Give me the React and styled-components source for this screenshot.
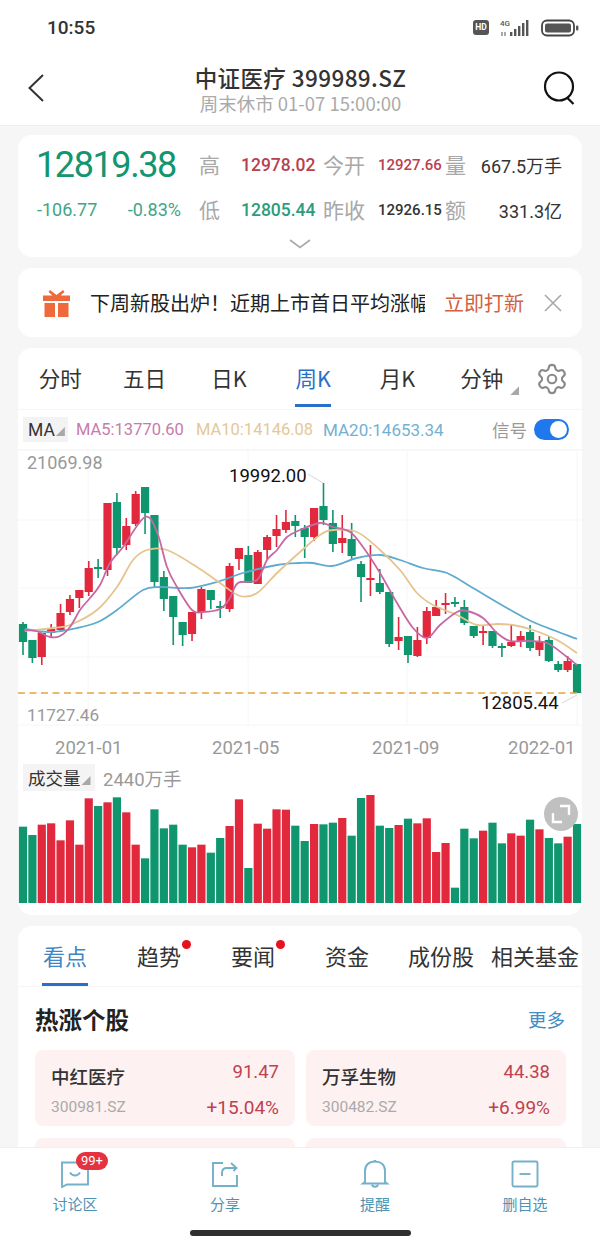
import React from "react";
import styled, { createGlobalStyle } from "styled-components";
import { Settings } from "lucide-react";

const RED = "#e2283c";
const GREEN = "#10966f";

// [up?, bodyTop, bodyBottom, wickTop, wickBottom]
const candles = [
  [0, 624, 642, 622, 655], [0, 640, 658, 640, 663], [1, 633, 657, 633, 665], [1, 629, 633, 624, 637],
  [1, 613, 630, 604, 632], [1, 599, 612, 595, 615], [1, 590, 598, 590, 608], [1, 568, 592, 561, 596],
  [0, 567, 569, 559, 578], [1, 503, 570, 503, 576], [0, 502, 548, 493, 555], [1, 526, 545, 518, 550],
  [1, 494, 524, 491, 526], [0, 487, 513, 487, 534], [0, 515, 582, 515, 588], [0, 577, 599, 571, 611],
  [0, 596, 617, 596, 645], [0, 622, 635, 622, 646], [1, 612, 634, 612, 641], [1, 589, 612, 587, 619],
  [0, 590, 600, 590, 609], [0, 606, 607, 601, 618], [1, 566, 609, 563, 612], [1, 548, 559, 548, 570],
  [0, 555, 583, 546, 583], [1, 552, 584, 550, 584], [1, 537, 550, 535, 560], [1, 529, 536, 515, 547],
  [1, 522, 530, 510, 533], [0, 521, 526, 515, 537], [0, 528, 537, 525, 558], [1, 508, 537, 508, 541],
  [0, 506, 520, 483, 525], [0, 523, 544, 510, 552], [1, 538, 543, 515, 553], [0, 539, 556, 523, 560],
  [0, 564, 577, 561, 602], [1, 578, 580, 545, 596], [0, 583, 592, 569, 594], [0, 592, 644, 592, 647],
  [1, 637, 641, 617, 650], [0, 636, 655, 636, 663], [1, 640, 656, 627, 657], [1, 611, 638, 607, 644],
  [1, 607, 616, 600, 616], [1, 603, 604, 593, 614], [0, 602, 604, 597, 607], [0, 607, 623, 600, 625],
  [0, 626, 636, 626, 638], [1, 631, 633, 625, 645], [0, 631, 646, 631, 648], [0, 646, 647, 643, 657],
  [1, 642, 646, 625, 647], [1, 636, 641, 631, 647], [0, 632, 648, 625, 651], [1, 642, 650, 636, 656],
  [0, 640, 661, 636, 662], [0, 664, 670, 661, 672], [1, 661, 670, 656, 672], [0, 664, 693, 664, 693],
];

// [up?, top in px from y=750, times 3]
const volumes = [
  [0, 230], [0, 255], [1, 224], [1, 220], [1, 271], [1, 211], [1, 284], [1, 145], [0, 168], [1, 157],
  [0, 142], [1, 187], [1, 284], [0, 325], [0, 178], [0, 235], [0, 224], [0, 284], [1, 292], [1, 284],
  [0, 308], [0, 264], [1, 228], [1, 148], [0, 354], [1, 221], [1, 236], [1, 178], [1, 179], [0, 227],
  [0, 273], [1, 222], [0, 223], [0, 218], [1, 204], [0, 257], [0, 144], [1, 133], [0, 227], [0, 234],
  [1, 225], [0, 206], [1, 220], [1, 205], [1, 306], [1, 279], [0, 413], [0, 236], [0, 265], [1, 242],
  [0, 218], [0, 280], [1, 250], [1, 257], [0, 209], [1, 238], [0, 264], [0, 280], [1, 260], [0, 222],
];

const ma5 = [[24, 630], [36, 631], [50, 637], [60, 636], [70, 627], [80, 610], [90, 598], [100, 585], [110, 563], [123, 547], [145, 517], [157, 532], [167, 567], [177, 587], [192, 610], [203, 612], [220, 609], [230, 598], [238, 583], [257, 580], [267, 560], [277, 550], [287, 537], [300, 530], [320, 523], [333, 527], [350, 532], [363, 547], [380, 573], [397, 603], [413, 628], [427, 638], [440, 625], [457, 612], [467, 611], [483, 618], [497, 633], [510, 641], [527, 641], [547, 643], [567, 657], [577, 665]];
const ma10 = [[25, 631], [53, 628], [70, 625], [97, 610], [117, 587], [133, 560], [147, 550], [167, 550], [197, 567], [220, 583], [240, 596], [257, 593], [277, 573], [300, 552], [320, 535], [333, 530], [357, 532], [380, 550], [400, 570], [417, 593], [433, 605], [457, 615], [477, 625], [497, 624], [513, 625], [533, 630], [557, 640], [577, 653]];
const ma20 = [[25, 629], [50, 632], [77, 628], [98, 622], [117, 610], [143, 590], [160, 587], [190, 588], [217, 582], [243, 573], [277, 565], [300, 563], [313, 563], [332, 566], [357, 558], [380, 555], [400, 560], [423, 568], [447, 573], [473, 588], [507, 608], [533, 622], [577, 639]];

const smooth = (pts) => {
  let d = `M${pts[0][0]} ${pts[0][1]}`;
  for (let i = 0; i < pts.length - 1; i++) {
    const p0 = pts[i - 1] || pts[i];
    const p1 = pts[i];
    const p2 = pts[i + 1];
    const p3 = pts[i + 2] || p2;
    const c1x = p1[0] + (p2[0] - p0[0]) / 6;
    const c1y = p1[1] + (p2[1] - p0[1]) / 6;
    const c2x = p2[0] - (p3[0] - p1[0]) / 6;
    const c2y = p2[1] - (p3[1] - p1[1]) / 6;
    d += ` C${c1x} ${c1y} ${c2x} ${c2y} ${p2[0]} ${p2[1]}`;
  }
  return d;
};

const barX = (i) => 23 + i * 9.39;

const KChart = () => (
  <ChartSvg viewBox="18 450 564 312">
    {[450, 520, 588, 657, 725].map((y) => (
      <line key={y} x1="18" x2="582" y1={y} y2={y} stroke="#f6f6f6" strokeWidth="1" />
    ))}
    {[88, 248, 407, 577].map((x) => (
      <line key={x} x1={x} x2={x} y1="450" y2="725" stroke="#f6f6f6" strokeWidth="1" />
    ))}
    {candles.map(([up, top, bottom, wTop, wBottom], i) => {
      const color = up ? RED : GREEN;
      return (
        <g key={i} fill={color}>
          <rect x={barX(i) - 0.8} y={wTop} width="1.6" height={wBottom - wTop} />
          <rect x={barX(i) - 4.1} y={top} width="8.2" height={Math.max(bottom - top, 2)} />
        </g>
      );
    })}
    <path d={smooth(ma20)} fill="none" stroke="#5fabd0" strokeWidth="1.8" />
    <path d={smooth(ma10)} fill="none" stroke="#e6c48e" strokeWidth="1.8" />
    <path d={smooth(ma5)} fill="none" stroke="#c768a4" strokeWidth="1.8" />
    <line x1="18" x2="582" y1="693" y2="693" stroke="#e3a43f" strokeWidth="1.6" strokeDasharray="7 4.5" />
    <path d="M308 474L323 483M562 703L577 695" stroke="#d8d8d8" strokeWidth="1" fill="none" />
    <AxisText x="27" y="469" $size="18px">21069.98</AxisText>
    <AxisText x="27" y="721" $size="17.2px">11727.46</AxisText>
    <PeakText x="229" y="482">19992.00</PeakText>
    <PeakText x="481" y="709">12805.44</PeakText>
    <AxisText x="55" y="754" $size="18.5px">2021-01</AxisText>
    <AxisText x="212" y="754" $size="18.5px">2021-05</AxisText>
    <AxisText x="372" y="754" $size="18.5px">2021-09</AxisText>
    <AxisText x="508" y="754" $size="18.5px">2022-01</AxisText>
  </ChartSvg>
);

const VolumeChart = () => (
  <VolumeSvg viewBox="18 795 564 110">
    {volumes.map(([up, top], i) => {
      const y = 750 + top / 3;
      return <rect key={i} x={barX(i) - 4.1} y={y} width="8.2" height={903 - y} fill={up ? RED : GREEN} />;
    })}
  </VolumeSvg>
);

const stocks = [
  { name: "中红医疗", code: "300981.SZ", price: "91.47", pct: "+15.04%" },
  { name: "万孚生物", code: "300482.SZ", price: "44.38", pct: "+6.99%" },
];

const App = () => (
  <>
    <GlobalStyle />
    <Page>
      <TopBar>
        <StatusBar>
          <Clock>10:55</Clock>
          <StatusIcons>
            <HdBadge>HD</HdBadge>
            <svg width="31" height="20" viewBox="0 0 31 20" fill="#555">
              <rect x="10" y="14" width="2.4" height="4" />
              <rect x="14" y="11" width="2.4" height="7" />
              <rect x="18" y="8" width="2.4" height="10" />
              <rect x="22" y="5" width="2.4" height="13" />
              <rect x="26" y="2" width="2.4" height="16" />
              <path d="M2 14v4M5 14v4" stroke="#555" strokeWidth="1" />
              <text x="0" y="8" fontSize="8" fontFamily="Roboto, sans-serif" fontWeight="500">4G</text>
            </svg>
            <svg width="38" height="18" viewBox="0 0 38 18">
              <rect x="1" y="1.5" width="32" height="15" rx="5" fill="none" stroke="#444" strokeWidth="1.8" />
              <rect x="4" y="4.5" width="26" height="9" rx="2" fill="#555" />
              <rect x="35" y="6.5" width="2.4" height="5" rx="1" fill="#555" />
            </svg>
          </StatusIcons>
        </StatusBar>
        <NavBar>
          <svg width="20" height="30" viewBox="0 0 20 30" fill="none" stroke="#333" strokeWidth="2">
            <path d="M17 2L3.5 15L17 28" />
          </svg>
          <NavTitle>
            <TitleText>中证医疗 399989.SZ</TitleText>
            <SubTitle>周末休市 01-07 15:00:00</SubTitle>
          </NavTitle>
          <svg width="34" height="34" viewBox="0 0 34 34" fill="none" stroke="#111" strokeWidth="2.2">
            <circle cx="16" cy="15.5" r="14" />
            <path d="M24 26.5L30.5 33" />
          </svg>
        </NavBar>
      </TopBar>

      <Scroll>
        <QuoteCard>
          <QuoteGrid>
            <BigPrice>12819.38</BigPrice>
            <QuoteLabel>高</QuoteLabel>
            <QuoteMain $color="#b9414f">12978.02</QuoteMain>
            <QuoteLabel>今开</QuoteLabel>
            <QuoteSmall $color="#b9414f">12927.66</QuoteSmall>
            <QuoteLabel>量</QuoteLabel>
            <QuoteRight>667.5万手</QuoteRight>
            <ChangeRow>
              <span>-106.77</span>
              <span>-0.83%</span>
            </ChangeRow>
            <QuoteLabel>低</QuoteLabel>
            <QuoteMain $color="#2c9c7c">12805.44</QuoteMain>
            <QuoteLabel>昨收</QuoteLabel>
            <QuoteSmall $color="#333">12926.15</QuoteSmall>
            <QuoteLabel>额</QuoteLabel>
            <QuoteRight>331.3亿</QuoteRight>
          </QuoteGrid>
          <Expand>
            <svg width="22" height="10" viewBox="0 0 22 10" fill="none" stroke="#aaa" strokeWidth="1.6">
              <path d="M1 1L11 8.5L21 1" />
            </svg>
          </Expand>
        </QuoteCard>

        <BannerCard>
          <svg width="27" height="28" viewBox="0 0 27 28" fill="#f0693a">
            <path d="M7 1l6.5 5L20 1l1.5 2-4 3.5H27V12H0V6.500h9.500l-4-3.500z" />
            <rect x="1.500" y="14" width="10.500" height="14" />
            <rect x="15" y="14" width="10.500" height="14" />
          </svg>
          <BannerText>下周新股出炉！近期上市首日平均涨幅</BannerText>
          <BannerAction>立即打新</BannerAction>
          <svg width="18" height="18" viewBox="0 0 18 18" stroke="#aaa" strokeWidth="1.7">
            <path d="M1 1l16 16M17 1L1 17" />
          </svg>
        </BannerCard>

        <ChartCard>
          <PeriodTabs>
            <PeriodList>
              {["分时", "五日", "日K", "周K", "月K", "分钟"].map((label) => (
                <PeriodTab key={label}>
                  <PeriodLabel $active={label === "周K"}>
                    {label}
                    {label === "分钟" && <TabCorner />}
                  </PeriodLabel>
                </PeriodTab>
              ))}
            </PeriodList>
            <Settings size={34} color="#8a8a8a" strokeWidth={1.5} />
          </PeriodTabs>
          <MaRow>
            <IndicatorBox>
              MA
              <Corner />
            </IndicatorBox>
            <MaValue $color="#c77bab" $width="120px">MA5:13770.60</MaValue>
            <MaValue $color="#e4c896" $width="127px">MA10:14146.08</MaValue>
            <MaValue $color="#74b1d0" $size="17px">MA20:14653.34</MaValue>
            <SignalLabel>信号</SignalLabel>
            <Toggle />
          </MaRow>
          <KChart />
          <VolumeHead>
            <VolumeBox>
              成交量
              <Corner />
            </VolumeBox>
            <VolumeValue>2440万手</VolumeValue>
          </VolumeHead>
          <VolumeWrap>
            <VolumeChart />
            <FullScreen>
              <svg width="20" height="20" viewBox="0 0 20 20" fill="none" stroke="#fff" strokeWidth="2.4">
                <path d="M9 2h9v9M2 9v9h9" />
              </svg>
            </FullScreen>
          </VolumeWrap>
        </ChartCard>

        <InfoCard>
          <InfoTabs>
            <InfoTab $active><InfoLabel $active>看点</InfoLabel></InfoTab>
            <InfoTab><InfoLabel>趋势<RedDot /></InfoLabel></InfoTab>
            <InfoTab><InfoLabel>要闻<RedDot /></InfoLabel></InfoTab>
            <InfoTab><InfoLabel>资金</InfoLabel></InfoTab>
            <InfoTab><InfoLabel>成份股</InfoLabel></InfoTab>
            <InfoTab><InfoLabel>相关基金</InfoLabel></InfoTab>
          </InfoTabs>
          <SectionHead>
            <SectionTitle>热涨个股</SectionTitle>
            <MoreLink>更多</MoreLink>
          </SectionHead>
          <StockGrid>
            {stocks.map((s) => (
              <StockCard key={s.code}>
                <StockName>{s.name}</StockName>
                <StockPrice>{s.price}</StockPrice>
                <StockCode>{s.code}</StockCode>
                <StockPct>{s.pct}</StockPct>
              </StockCard>
            ))}
            <StockCard />
            <StockCard />
          </StockGrid>
        </InfoCard>
      </Scroll>

      <BottomNav>
        <NavItems>
          <NavItem>
            <IconWrap>
              <svg width="30" height="28" viewBox="0 0 30 28" fill="none" stroke="#74b0c9" strokeWidth="1.9">
                <path d="M2 2.500h26v22H7l-5 2.500z" />
                <path d="M10 12.500c2.500 4 7.500 4 10 0" />
              </svg>
              <CountBadge>99+</CountBadge>
            </IconWrap>
            <NavLabel>讨论区</NavLabel>
          </NavItem>
          <NavItem>
            <IconWrap>
              <svg width="30" height="28" viewBox="0 0 30 28" fill="none" stroke="#74b0c9" strokeWidth="1.9">
                <path d="M13 3H3v23h24V15" />
                <path d="M12 16v-3c0-3 2-5 5-5h9M21 3l5.500 5-3 3" />
              </svg>
            </IconWrap>
            <NavLabel>分享</NavLabel>
          </NavItem>
          <NavItem>
            <IconWrap>
              <svg width="30" height="30" viewBox="0 0 30 30" fill="none" stroke="#74b0c9" strokeWidth="1.9">
                <path d="M5 23V12c0-6 4-9.500 10-9.500S25 6 25 12v11l2 1.500H3z" />
                <path d="M12 25.500c.5 3 5.500 3 6 0M15 2.500V1" />
              </svg>
            </IconWrap>
            <NavLabel>提醒</NavLabel>
          </NavItem>
          <NavItem>
            <IconWrap>
              <svg width="30" height="28" viewBox="0 0 30 28" fill="none" stroke="#74b0c9" strokeWidth="1.9">
                <rect x="2.500" y="1.500" width="25" height="25" rx="1.500" />
                <path d="M9.500 14h11" />
              </svg>
            </IconWrap>
            <NavLabel>删自选</NavLabel>
          </NavItem>
        </NavItems>
        <HomeBar />
      </BottomNav>
    </Page>
  </>
);

const CJK = `"Noto Sans CJK SC", "Noto Sans", sans-serif`;
const NUM = `Roboto, "Noto Sans CJK SC", sans-serif`;

const GlobalStyle = createGlobalStyle`
  html, body {
    margin: 0;
    padding: 0;
    background: #f6f6f6;
  }
  * {
    box-sizing: border-box;
  }
`;

const Page = styled.div`
  width: 600px;
  height: 1248px;
  display: flex;
  flex-direction: column;
  overflow: hidden;
  background: #f6f6f6;
  font-family: ${CJK};
`;

const TopBar = styled.header`
  height: 126px;
  flex-shrink: 0;
  background: #fff;
  border-bottom: 1px solid #eee;
`;

const StatusBar = styled.div`
  height: 55px;
  display: flex;
  align-items: center;
  justify-content: space-between;
  padding: 0 21px 0 47px;
`;

const Clock = styled.span`
  font-family: ${NUM};
  font-size: 19px;
  font-weight: 500;
  color: #333;
`;

const StatusIcons = styled.div`
  display: flex;
  align-items: center;
  gap: 10px;
`;

const HdBadge = styled.span`
  width: 16px;
  height: 15px;
  border-radius: 3px;
  background: #555;
  color: #fff;
  font-family: ${NUM};
  font-size: 8.5px;
  font-weight: 700;
  line-height: 15px;
  text-align: center;
  margin-right: 1px;
`;

const NavBar = styled.div`
  height: 70px;
  display: flex;
  align-items: center;
  justify-content: space-between;
  padding: 0 23px 4px 26px;
`;

const NavTitle = styled.div`
  display: flex;
  flex-direction: column;
  align-items: center;
  margin-left: 12px;
`;

const TitleText = styled.div`
  font-size: 22.5px;
  font-weight: 500;
  line-height: 30px;
  letter-spacing: 0.4px;
  color: #333;
`;

const SubTitle = styled.div`
  font-size: 18.5px;
  line-height: 22px;
  color: #aaa;
`;

const Scroll = styled.main`
  flex: 1;
  min-height: 0;
  overflow: hidden;
  padding: 9px 18px 0;
  display: flex;
  flex-direction: column;
  gap: 11px;
`;

const Card = styled.section`
  flex-shrink: 0;
  background: #fff;
  border-radius: 14px;
`;

const QuoteCard = styled(Card)`
  height: 122px;
  padding: 7px 20px 0 18px;
`;

const QuoteGrid = styled.div`
  display: grid;
  grid-template-columns: 163px 42px 82px 55px 67px 35px 82px;
  grid-auto-rows: 45px;
  align-items: center;
`;

const BigPrice = styled.div`
  font-family: ${NUM};
  font-size: 36px;
  letter-spacing: -1.4px;
  color: #13956f;
`;

const QuoteLabel = styled.div`
  font-size: 21px;
  color: #a8a8a8;
  line-height: 1;
  white-space: nowrap;
`;

const QuoteMain = styled.div`
  font-family: ${NUM};
  font-size: 17.5px;
  font-weight: 500;
  color: ${(p) => p.$color};
`;

const QuoteSmall = styled.div`
  font-family: ${NUM};
  font-size: 15px;
  font-weight: 500;
  color: ${(p) => p.$color};
`;

const QuoteRight = styled.div`
  font-family: ${NUM};
  font-size: 18px;
  color: #333;
  text-align: right;
  white-space: nowrap;
`;

const ChangeRow = styled.div`
  width: 145px;
  display: flex;
  justify-content: space-between;
  padding-left: 1px;
  font-family: ${NUM};
  font-size: 18px;
  color: #3fa587;
`;

const Expand = styled.div`
  display: flex;
  justify-content: center;
  padding-top: 7px;
  margin-left: 2px;
`;

const BannerCard = styled(Card)`
  height: 69px;
  display: flex;
  align-items: center;
  padding: 0 19px 0 25px;
`;

const BannerText = styled.div`
  width: 335px;
  margin-left: 20px;
  font-size: 20px;
  color: #222;
  white-space: nowrap;
  overflow: hidden;
`;

const BannerAction = styled.div`
  margin: 0 20px 0 19px;
  font-size: 20px;
  color: #d2613f;
  white-space: nowrap;
`;

const ChartCard = styled(Card)`
  height: 567px;
`;

const PeriodTabs = styled.div`
  height: 62px;
  display: flex;
  align-items: center;
  padding-right: 13px;
  border-bottom: 1px solid #f5f5f5;
`;

const PeriodList = styled.div`
  width: 506px;
  height: 100%;
  display: flex;
  margin-right: 11px;
`;

const PeriodTab = styled.div`
  flex: 1;
  display: flex;
  justify-content: center;
  padding-bottom: 2px;
`;

const PeriodLabel = styled.div`
  position: relative;
  display: flex;
  align-items: center;
  padding-top: 3px;
  font-size: 21.5px;
  color: ${(p) => (p.$active ? "#2a6fc9" : "#333")};
  border-bottom: 3px solid ${(p) => (p.$active ? "#2a6fc9" : "transparent")};
`;

const Corner = styled.i`
  display: inline-block;
  width: 9px;
  height: 9px;
  margin-left: 1px;
  align-self: flex-end;
  margin-bottom: 6px;
  background: #a8a8a8;
  clip-path: polygon(100% 0, 100% 100%, 0 100%);
`;

const TabCorner = styled(Corner)`
  position: absolute;
  right: -16px;
  bottom: 9px;
  margin: 0;
  width: 9px;
  height: 9px;
`;

const MaRow = styled.div`
  height: 40px;
  display: flex;
  align-items: center;
  padding: 0 13px 0 5px;
  border-bottom: 1px solid #f5f5f5;
`;

const IndicatorBox = styled.div`
  width: 45px;
  height: 25px;
  display: flex;
  align-items: center;
  padding-left: 5px;
  margin-right: 8px;
  background: #f3f3f3;
  font-family: ${NUM};
  font-size: 17.5px;
  color: #333;
`;

const MaValue = styled.span`
  width: ${(p) => p.$width || "auto"};
  font-family: ${NUM};
  font-size: ${(p) => p.$size || "16.5px"};
  color: ${(p) => p.$color};
  white-space: nowrap;
`;

const SignalLabel = styled.span`
  margin-left: auto;
  margin-right: 7px;
  font-size: 17.5px;
  color: #999;
`;

const Toggle = styled.span`
  width: 35px;
  height: 21px;
  display: flex;
  justify-content: flex-end;
  align-items: center;
  padding-right: 2px;
  border-radius: 11px;
  background: #1f78ee;
  &::after {
    content: "";
    width: 17px;
    height: 17px;
    border-radius: 50%;
    background: #fff;
  }
`;

const ChartSvg = styled.svg`
  display: block;
  width: 564px;
  height: 312px;
`;

const AxisText = styled.text`
  font-family: ${NUM};
  font-size: ${(p) => p.$size};
  fill: #999;
`;

const PeakText = styled.text`
  font-family: ${NUM};
  font-size: 18.5px;
  fill: #111;
`;

const VolumeHead = styled.div`
  height: 33px;
  display: flex;
  align-items: center;
  padding: 0 5px 2px;
`;

const VolumeBox = styled.div`
  width: 72px;
  height: 27px;
  display: flex;
  align-items: center;
  padding-left: 5px;
  background: #f4f4f4;
  font-size: 17.5px;
  color: #333;
  white-space: nowrap;
`;

const VolumeValue = styled.span`
  margin-left: 8px;
  font-family: ${NUM};
  font-size: 18.5px;
  color: #999;
`;

const VolumeWrap = styled.div`
  position: relative;
  height: 110px;
`;

const VolumeSvg = styled.svg`
  display: block;
  width: 564px;
  height: 110px;
`;

const FullScreen = styled.div`
  position: absolute;
  top: 2px;
  right: 4px;
  width: 34px;
  height: 34px;
  display: flex;
  align-items: center;
  justify-content: center;
  border-radius: 50%;
  background: rgba(185, 185, 185, 0.9);
`;

const InfoCard = styled(Card)`
  flex: 1;
  border-radius: 14px 14px 0 0;
  overflow: hidden;
`;

const InfoTabs = styled.div`
  height: 61px;
  display: grid;
  grid-template-columns: repeat(6, 94px);
  border-bottom: 1px solid #f5f5f5;
`;

const InfoTab = styled.div`
  display: flex;
  justify-content: center;
`;

const InfoLabel = styled.div`
  position: relative;
  height: 60px;
  padding: 0 1px;
  display: flex;
  align-items: center;
  font-size: 22px;
  white-space: nowrap;
  color: ${(p) => (p.$active ? "#3f86c5" : "#333")};
  border-bottom: 3px solid ${(p) => (p.$active ? "#2a6fc9" : "transparent")};
`;

const RedDot = styled.i`
  position: absolute;
  top: 14px;
  right: -9px;
  width: 9px;
  height: 9px;
  border-radius: 50%;
  background: #e6101e;
`;

const SectionHead = styled.div`
  height: 63px;
  display: flex;
  align-items: center;
  justify-content: space-between;
  padding: 1px 17px 0;
`;

const SectionTitle = styled.h2`
  margin: 0;
  font-size: 23.5px;
  font-weight: 700;
  color: #222;
`;

const MoreLink = styled.span`
  font-size: 18.5px;
  color: #3f8dc4;
`;

const StockGrid = styled.div`
  display: grid;
  grid-template-columns: 260px 260px;
  grid-auto-rows: 76px;
  gap: 12px 11px;
  padding: 0 17px;
`;

const StockCard = styled.div`
  display: grid;
  grid-template-columns: 1fr auto;
  grid-template-rows: 40px 30px;
  align-items: center;
  padding: 2px 16px 0;
  border-radius: 8px;
  background: #fdf1f1;
`;

const StockName = styled.div`
  padding-top: 7px;
  font-size: 18.5px;
  font-weight: 500;
  color: #333;
`;

const StockPrice = styled.div`
  justify-self: end;
  font-family: ${NUM};
  font-size: 18.5px;
  color: #bf4150;
`;

const StockCode = styled.div`
  font-family: ${NUM};
  font-size: 15.5px;
  color: #aaa;
`;

const StockPct = styled.div`
  justify-self: end;
  font-family: ${NUM};
  font-size: 19px;
  color: #bf4150;
`;

const BottomNav = styled.footer`
  height: 100px;
  flex-shrink: 0;
  background: #fff;
  box-shadow: 0 -1px 0 #f0f0f0;
`;

const NavItems = styled.div`
  display: grid;
  grid-template-columns: repeat(4, 150px);
  padding-top: 11px;
`;

const NavItem = styled.div`
  display: flex;
  flex-direction: column;
  align-items: center;
`;

const IconWrap = styled.div`
  position: relative;
  height: 30px;
  display: flex;
  align-items: center;
`;

const CountBadge = styled.span`
  position: absolute;
  top: -7px;
  left: 16px;
  width: 32px;
  height: 18px;
  border-radius: 9px;
  background: #e5323f;
  color: #fff;
  font-family: ${NUM};
  font-size: 13px;
  line-height: 18px;
  text-align: center;
`;

const NavLabel = styled.span`
  margin-top: 4px;
  font-size: 15px;
  line-height: 22px;
  color: #4f93b2;
`;

const HomeBar = styled.div`
  width: 221px;
  height: 6px;
  margin: 15px auto 0;
  border-radius: 3px;
  background: #2f2f2f;
`;

export default App;
